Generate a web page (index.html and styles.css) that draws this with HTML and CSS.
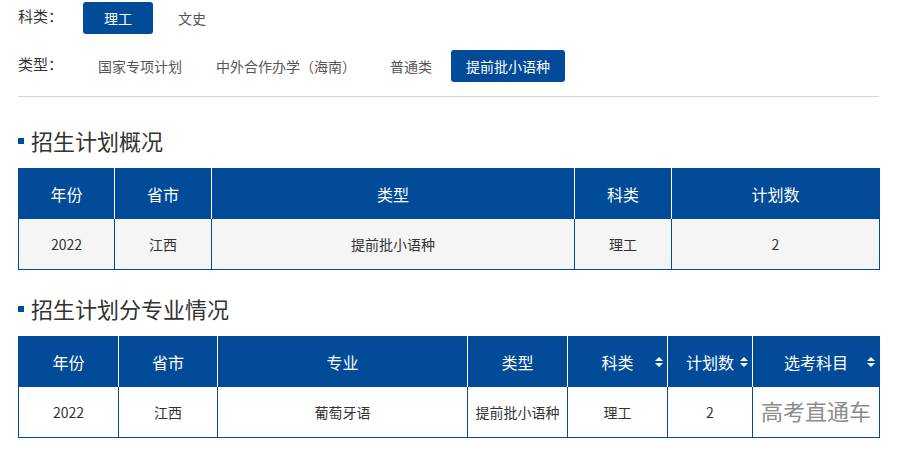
FILE: index.html
```html
<!DOCTYPE html>
<html lang="zh-CN">
<head>
<meta charset="utf-8">
<title>招生计划</title>
<link rel="stylesheet" href="styles.css">
</head>
<body>
<div class="page">
  <div class="filter-row">
    <span class="filter-label">科类：</span>
    <div class="filter-items">
      <span class="item item-wide active">理工</span>
      <span class="item item-wide">文史</span>
    </div>
  </div>
  <div class="filter-row row-2">
    <span class="filter-label">类型：</span>
    <div class="filter-items">
      <span class="item">国家专项计划</span>
      <span class="item">中外合作办学（海南）</span>
      <span class="item">普通类</span>
      <span class="item active">提前批小语种</span>
    </div>
  </div>
  <div class="divider"></div>

  <h2 class="section-title first"><span class="bullet"></span>招生计划概况</h2>
  <table class="data-table">
    <colgroup>
      <col class="w96"><col class="w97"><col class="w363"><col class="w97"><col class="w208">
    </colgroup>
    <thead>
      <tr><th>年份</th><th>省市</th><th>类型</th><th>科类</th><th>计划数</th></tr>
    </thead>
    <tbody>
      <tr class="gray"><td>2022</td><td>江西</td><td>提前批小语种</td><td>理工</td><td>2</td></tr>
    </tbody>
  </table>

  <h2 class="section-title second"><span class="bullet"></span>招生计划分专业情况</h2>
  <table class="data-table">
    <colgroup>
      <col class="w100"><col class="w99"><col class="w250"><col class="w100"><col class="w100"><col class="w85"><col class="w127">
    </colgroup>
    <thead>
      <tr>
        <th>年份</th><th>省市</th><th>专业</th><th>类型</th>
        <th class="sortable">科类<svg class="sort" viewBox="0 0 8 10" width="8" height="10"><polygon points="0,4 4,0 8,4" /><polygon points="0,6 4,10 8,6" /></svg></th>
        <th class="sortable">计划数<svg class="sort" viewBox="0 0 8 10" width="8" height="10"><polygon points="0,4 4,0 8,4" /><polygon points="0,6 4,10 8,6" /></svg></th>
        <th class="sortable">选考科目<svg class="sort" viewBox="0 0 8 10" width="8" height="10"><polygon points="0,4 4,0 8,4" /><polygon points="0,6 4,10 8,6" /></svg></th>
      </tr>
    </thead>
    <tbody>
      <tr><td>2022</td><td>江西</td><td>葡萄牙语</td><td>提前批小语种</td><td>理工</td><td>2</td><td class="watermark">高考直通车</td></tr>
    </tbody>
  </table>
</div>
</body>
</html>
```
FILE: styles.css
```css
* { box-sizing: border-box; }
html, body { margin: 0; padding: 0; background: #fff; }
body {
  font-family: "Noto Sans CJK SC", "Noto Sans", "Liberation Sans", sans-serif;
  color: #333;
}
.page {
  width: 901px;
  padding: 2px 22px 0 18px;
}
.filter-row {
  display: flex;
  align-items: center;
  height: 32px;
}
.row-2 { margin-top: 16px; }
.filter-label {
  width: 65px;
  font-size: 15px;
  color: #333;
  line-height: 28px;
  align-self: flex-start;
}
.filter-items {
  display: flex;
  gap: 4px;
}
.item {
  display: flex;
  align-items: center;
  height: 32px;
  padding: 0 15px;
  font-size: 14px;
  color: #555;
  border-radius: 3px;
}
.item-wide { padding: 0 21px; }
.item.active {
  background: #024b99;
  color: #fff;
}
.divider {
  margin-top: 14px;
  border-top: 1px solid #d4d4d4;
}
.section-title {
  display: flex;
  align-items: center;
  margin: 0;
  height: 30px;
  font-size: 22px;
  font-weight: normal;
  color: #333;
}
.section-title.first { margin-top: 28px; margin-bottom: 13px; }
.section-title.second { margin-top: 23px; margin-bottom: 13px; }
.bullet {
  width: 6px;
  height: 6px;
  background: #024b99;
  margin-right: 7px;
  margin-top: 2px;
}
.data-table {
  width: 861px;
  table-layout: fixed;
  border-collapse: collapse;
  border: 1px solid #024b99;
}
.w85 { width: 85px; }
.w96 { width: 96px; }
.w97 { width: 97px; }
.w99 { width: 99px; }
.w100 { width: 100px; }
.w127 { width: 127px; }
.w208 { width: 208px; }
.w250 { width: 250px; }
.w363 { width: 363px; }
.data-table th {
  height: 50px;
  padding: 0;
  background: #024b99;
  color: #fff;
  font-size: 16px;
  font-weight: normal;
  border-right: 1px solid #fff;
  text-align: center;
}
.data-table th:last-child { border-right: 1px solid #024b99; }
.data-table td {
  height: 51px;
  padding: 0;
  font-size: 14px;
  color: #333;
  text-align: center;
  border-right: 1px solid #024b99;
  background: #fff;
}
.data-table tr.gray td { background: #f5f5f5; }
.sortable { position: relative; }
.sort {
  position: absolute;
  right: 4px;
  top: 50%;
  margin-top: -5px;
  fill: #fff;
}
.data-table td.watermark {
  font-size: 22px;
  color: #8c8c8c;
  white-space: nowrap;
  padding-bottom: 4px;
}
```
